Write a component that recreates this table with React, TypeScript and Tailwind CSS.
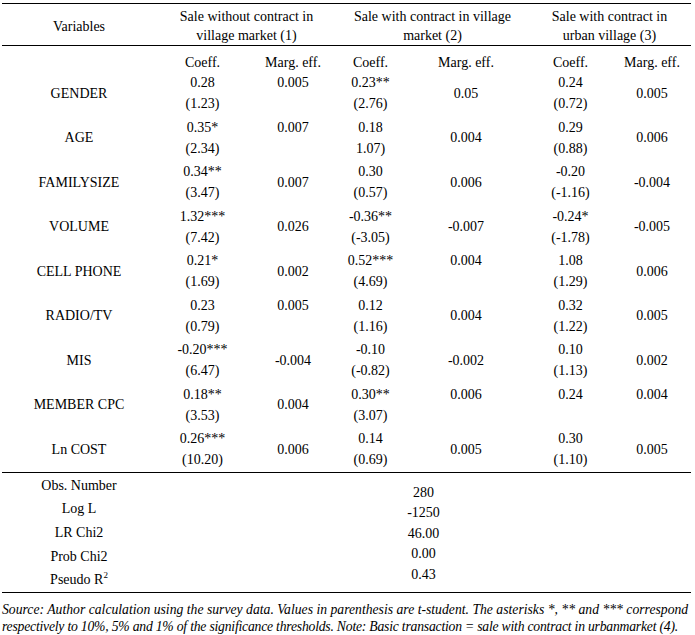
import React from 'react';

type Row = {
  name: string;
  c1: string[];
  m1: string;
  m1Top?: boolean;
  c2: string[];
  m2: string;
  m2Top?: boolean;
  c3: string[];
  m3: string;
  m3Top?: boolean;
};

const ROWS: Row[] = [
  { name: 'GENDER', c1: ['0.28', '(1.23)'], m1: '0.005', m1Top: true, c2: ['0.23**', '(2.76)'], m2: '0.05', c3: ['0.24', '(0.72)'], m3: '0.005' },
  { name: 'AGE', c1: ['0.35*', '(2.34)'], m1: '0.007', m1Top: true, c2: ['0.18', '1.07)'], m2: '0.004', c3: ['0.29', '(0.88)'], m3: '0.006' },
  { name: 'FAMILYSIZE', c1: ['0.34**', '(3.47)'], m1: '0.007', c2: ['0.30', '(0.57)'], m2: '0.006', c3: ['-0.20', '(-1.16)'], m3: '-0.004' },
  { name: 'VOLUME', c1: ['1.32***', '(7.42)'], m1: '0.026', c2: ['-0.36**', '(-3.05)'], m2: '-0.007', c3: ['-0.24*', '(-1.78)'], m3: '-0.005' },
  { name: 'CELL PHONE', c1: ['0.21*', '(1.69)'], m1: '0.002', c2: ['0.52***', '(4.69)'], m2: '0.004', m2Top: true, c3: ['1.08', '(1.29)'], m3: '0.006' },
  { name: 'RADIO/TV', c1: ['0.23', '(0.79)'], m1: '0.005', m1Top: true, c2: ['0.12', '(1.16)'], m2: '0.004', c3: ['0.32', '(1.22)'], m3: '0.005' },
  { name: 'MIS', c1: ['-0.20***', '(6.47)'], m1: '-0.004', c2: ['-0.10', '(-0.82)'], m2: '-0.002', c3: ['0.10', '(1.13)'], m3: '0.002' },
  { name: 'MEMBER CPC', c1: ['0.18**', '(3.53)'], m1: '0.004', c2: ['0.30**', '(3.07)'], m2: '0.006', m2Top: true, c3: ['0.24'], m3: '0.004', m3Top: true },
  { name: 'Ln COST', c1: ['0.26***', '(10.20)'], m1: '0.006', c2: ['0.14', '(0.69)'], m2: '0.005', c3: ['0.30', '(1.10)'], m3: '0.005' },
];

const STATS = [
  ['Obs. Number', '280'],
  ['Log L', '-1250'],
  ['LR Chi2', '46.00'],
  ['Prob Chi2', '0.00'],
];

const GRID = 'grid grid-cols-[154px_93px_88px_67px_124px_85px_78px]';

const Cell: React.FC<{ lines: string[]; top?: boolean }> = ({ lines, top }) => (
  <div className="flex flex-col justify-center items-center leading-[21px]">
    {lines.map((l, i) => (
      <div key={i} className="whitespace-nowrap">{l}</div>
    ))}
    {top && lines.length === 1 && <div className="h-[21px]" />}
  </div>
);

const App: React.FC = () => {
  return (
    <div className="w-[695px] h-[635px] bg-white text-black font-['Liberation_Serif','Times_New_Roman',serif] text-[14px] pt-[3px]">
      <div className="ml-[2px] w-[689px]">
        {/* header */}
        <div className={`${GRID} border-t border-b border-black h-[43px] pt-[3px] leading-[19px] text-center`}>
          <div className="flex items-center justify-center">Variables</div>
          <div className="col-span-2 flex flex-col items-center justify-center">
            <span>Sale without contract in</span>
            <span>village market (1)</span>
          </div>
          <div className="col-span-2 flex flex-col items-center justify-center">
            <span>Sale with contract in village</span>
            <span>market (2)</span>
          </div>
          <div className="col-span-2 flex flex-col items-center justify-center">
            <span>Sale with contract in</span>
            <span>urban village (3)</span>
          </div>
        </div>

        <div className={`${GRID} h-[25px] leading-[16px] pt-[9px] text-center`}>
          <div />
          <div>Coeff.</div>
          <div>Marg. eff.</div>
          <div>Coeff.</div>
          <div>Marg. eff.</div>
          <div>Coeff.</div>
          <div>Marg. eff.</div>
        </div>

        {ROWS.map((r) => (
          <div key={r.name} className={`${GRID} h-[44.5px]`}>
            <div className="flex items-center justify-center whitespace-nowrap">{r.name}</div>
            <Cell lines={r.c1} />
            <Cell lines={[r.m1]} top={r.m1Top} />
            <Cell lines={r.c2} />
            <Cell lines={[r.m2]} top={r.m2Top} />
            <Cell lines={r.c3} top={r.c3.length === 1} />
            <Cell lines={[r.m3]} top={r.m3Top} />
          </div>
        ))}

        {/* model statistics */}
        <div className="flex border-t border-b border-black h-[121px]">
          <div className="w-[154px] flex flex-col pt-[1px]">
            {STATS.map(([label]) => (
              <div key={label} className="h-[23.8px] flex items-center justify-center">{label}</div>
            ))}
            <div className="h-[23.8px] flex items-center justify-center">
              Pseudo R<sup className="text-[9px] relative -top-[5px]">2</sup>
            </div>
          </div>
          <div className="flex-1 flex flex-col items-center justify-center leading-[20.5px] pt-[4px]">
            {STATS.map(([label, v]) => (
              <div key={label}>{v}</div>
            ))}
            <div>0.43</div>
          </div>
        </div>

        <div className="italic text-[13.7px] leading-[17px] pt-[8px] whitespace-nowrap">
          <div>Source: Author calculation using the survey data. Values in parenthesis are t-student. The asterisks *, ** and *** correspond</div>
          <div className="tracking-[-0.22px]">respectively to 10%, 5% and 1% of the significance thresholds. Note: Basic transaction = sale with contract in urbanmarket (4).</div>
        </div>
      </div>
    </div>
  );
};

export default App;
